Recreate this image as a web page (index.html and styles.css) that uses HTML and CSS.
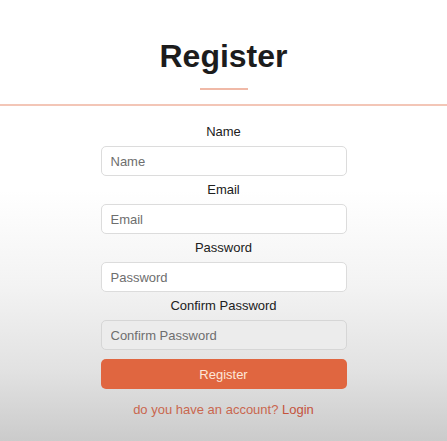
FILE: index.html
```html
<!DOCTYPE html>
<html lang="en">
<head>
<meta charset="utf-8">
<title>Register</title>
<link rel="stylesheet" href="styles.css">
</head>
<body>
<div class="page">
  <header class="header">
    <h1 class="title">Register</h1>
    <div class="title-underline"></div>
  </header>
  <form class="form">
    <div class="field">
      <label class="label" for="name">Name</label>
      <input class="input" id="name" type="text" placeholder="Name">
    </div>
    <div class="field">
      <label class="label" for="email">Email</label>
      <input class="input" id="email" type="email" placeholder="Email">
    </div>
    <div class="field">
      <label class="label" for="password">Password</label>
      <input class="input" id="password" type="password" placeholder="Password">
    </div>
    <div class="field">
      <label class="label" for="confirm">Confirm Password</label>
      <input class="input input-muted" id="confirm" type="password" placeholder="Confirm Password">
    </div>
    <button class="button" type="button">Register</button>
    <p class="switch">do you have an account? <a class="switch-link" href="#">Login</a></p>
  </form>
</div>
</body>
</html>
```

FILE: styles.css
```css
html, body {
  margin: 0;
  padding: 0;
  height: 100%;
}
body {
  font-family: "Liberation Sans", Arial, sans-serif;
  background: linear-gradient(to bottom, #ffffff 0px, #ffffff 190px, #f3f3f3 285px, #e2e2e2 370px, #cbcbcb 441px);
  color: #222;
}
.page {
  display: flex;
  flex-direction: column;
  align-items: center;
}
.header {
  width: 100%;
  display: flex;
  flex-direction: column;
  align-items: center;
  padding-top: 38px;
  border-bottom: 2px solid #f3c6b7;
  height: 66px;
}
.title {
  margin: 0;
  font-size: 32px;
  font-weight: bold;
  line-height: 37px;
  color: #1c1c1c;
}
.title-underline {
  width: 48px;
  height: 2px;
  background: #f0b9a7;
  margin-top: 13px;
}
.form {
  width: 246px;
  display: flex;
  flex-direction: column;
  padding-top: 18px;
}
.field {
  display: flex;
  flex-direction: column;
  margin-bottom: 6px;
}
.label {
  text-align: center;
  font-size: 13px;
  line-height: 16px;
  color: #202020;
  margin-bottom: 6px;
}
.input {
  box-sizing: border-box;
  height: 30px;
  width: 100%;
  border: 1px solid #dcdcdc;
  border-radius: 5px;
  background: #ffffff;
  padding: 0 9px;
  font-family: "Liberation Sans", Arial, sans-serif;
  font-size: 13px;
  color: #333;
}
.input::placeholder {
  color: #6e6e6e;
}
.input-muted {
  background: #ececec;
  border-color: #d6d6d6;
}
.button {
  margin-top: 3px;
  height: 30px;
  border: none;
  border-radius: 5px;
  background: #e06640;
  color: #fde6d8;
  font-family: "Liberation Sans", Arial, sans-serif;
  font-size: 13px;
  cursor: pointer;
}
.switch {
  margin: 13px 0 0;
  text-align: center;
  font-size: 13px;
  line-height: 16px;
  color: #c9674f;
}
.switch-link {
  color: #c4533c;
  text-decoration: none;
}
```
